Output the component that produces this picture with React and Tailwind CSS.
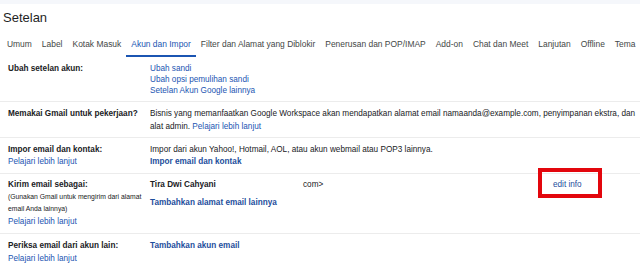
import React from "react";

const tabs = [
  "Umum",
  "Label",
  "Kotak Masuk",
  "Akun dan Impor",
  "Filter dan Alamat yang Diblokir",
  "Penerusan dan POP/IMAP",
  "Add-on",
  "Chat dan Meet",
  "Lanjutan",
  "Offline",
  "Tema",
];

function Row({ label, children, pt = "pt-[6px]", pb = "pb-[5px]", border = true }) {
  return (
    <div className={`flex ${pt} ${pb} ${border ? "border-b border-[#ececec]" : ""}`}>
      <div className="w-[150px] shrink-0 pl-[8px]">{label}</div>
      <div className="flex-1 min-w-0">{children}</div>
    </div>
  );
}

export default function App() {
  return (
    <div className="w-[640px] h-[267px] overflow-hidden bg-white font-['Liberation_Sans',Arial,sans-serif] text-[#202124]">
      <div className="h-[4px] bg-[#f5f7fb]" />
      <div className="h-[28px] pl-[3px] pt-[6px] text-[13px] leading-[16px] text-[#1f1f1f]">
        Setelan
      </div>
      <div className="flex pl-[2px] text-[8.45px] leading-[12px] whitespace-nowrap">
        {tabs.map((t) => (
          <div
            key={t}
            className={
              t === "Akun dan Impor"
                ? "px-[5px] pt-[6px] pb-[5px] border-b-2 border-[#1b55b2] text-[#1b55b2]"
                : "px-[5px] pt-[6px] pb-[5px] border-b-2 border-transparent text-[#444746]"
            }
          >
            {t}
          </div>
        ))}
      </div>

      <div className="text-[8.2px]">
        <Row label={<div className="font-bold leading-[11px]">Ubah setelan akun:</div>}>
          <div className="leading-[11px] text-[#1b55b2]">
            <div>Ubah sandi</div>
            <div>Ubah opsi pemulihan sandi</div>
            <div>Setelan Akun Google lainnya</div>
          </div>
        </Row>

        <Row
          pt="pt-[5px]"
          pb="pb-[4px]"
          label={<div className="font-bold leading-[13px] whitespace-nowrap">Memakai Gmail untuk pekerjaan?</div>}
        >
          <div className="leading-[13px] whitespace-nowrap">
            <div>
              Bisnis yang memanfaatkan Google Workspace akan mendapatkan alamat email namaanda@example.com, penyimpanan ekstra, dan
            </div>
            <div>
              alat admin. <span className="text-[#1b55b2]">Pelajari lebih lanjut</span>
            </div>
          </div>
        </Row>

        <Row
          label={
            <div className="leading-[12px]">
              <div className="font-bold">Impor email dan kontak:</div>
              <div className="text-[#1b55b2]">Pelajari lebih lanjut</div>
            </div>
          }
        >
          <div className="leading-[12px] whitespace-nowrap">
            <div>Impor dari akun Yahoo!, Hotmail, AOL, atau akun webmail atau POP3 lainnya.</div>
            <div className="font-bold text-[#1d4e9c]">Impor email dan kontak</div>
          </div>
        </Row>

        <Row
          pt="pt-[5px]"
          label={
            <div>
              <div className="font-bold leading-[12px]">Kirim email sebagai:</div>
              <div className="text-[6.8px] leading-[12px] whitespace-nowrap">
                (Gunakan Gmail untuk mengirim dari alamat
              </div>
              <div className="text-[6.8px] leading-[12px]">email Anda lainnya)</div>
              <div className="leading-[13px] text-[#1b55b2]">Pelajari lebih lanjut</div>
            </div>
          }
        >
          <div className="leading-[12px]">
            <div className="flex whitespace-nowrap">
              <div className="w-[153px] font-bold">Tira Dwi Cahyani</div>
              <div className="w-[250px]">com&gt;</div>
              <div className="relative text-[#1d4e9c]">
                edit info
                <div className="absolute left-[-15px] top-[-11px] w-[64px] h-[30px] border-[4px] border-[#e3060d]" />
              </div>
            </div>
            <div className="mt-[6px] font-bold text-[#1d4e9c]">Tambahkan alamat email lainnya</div>
          </div>
        </Row>

        <Row
          pt="pt-[5px]"
          border={false}
          label={
            <div className="leading-[13px]">
              <div className="font-bold">Periksa email dari akun lain:</div>
              <div className="text-[#1b55b2]">Pelajari lebih lanjut</div>
            </div>
          }
        >
          <div className="leading-[13px] font-bold text-[#1d4e9c]">Tambahkan akun email</div>
        </Row>
      </div>
    </div>
  );
}
